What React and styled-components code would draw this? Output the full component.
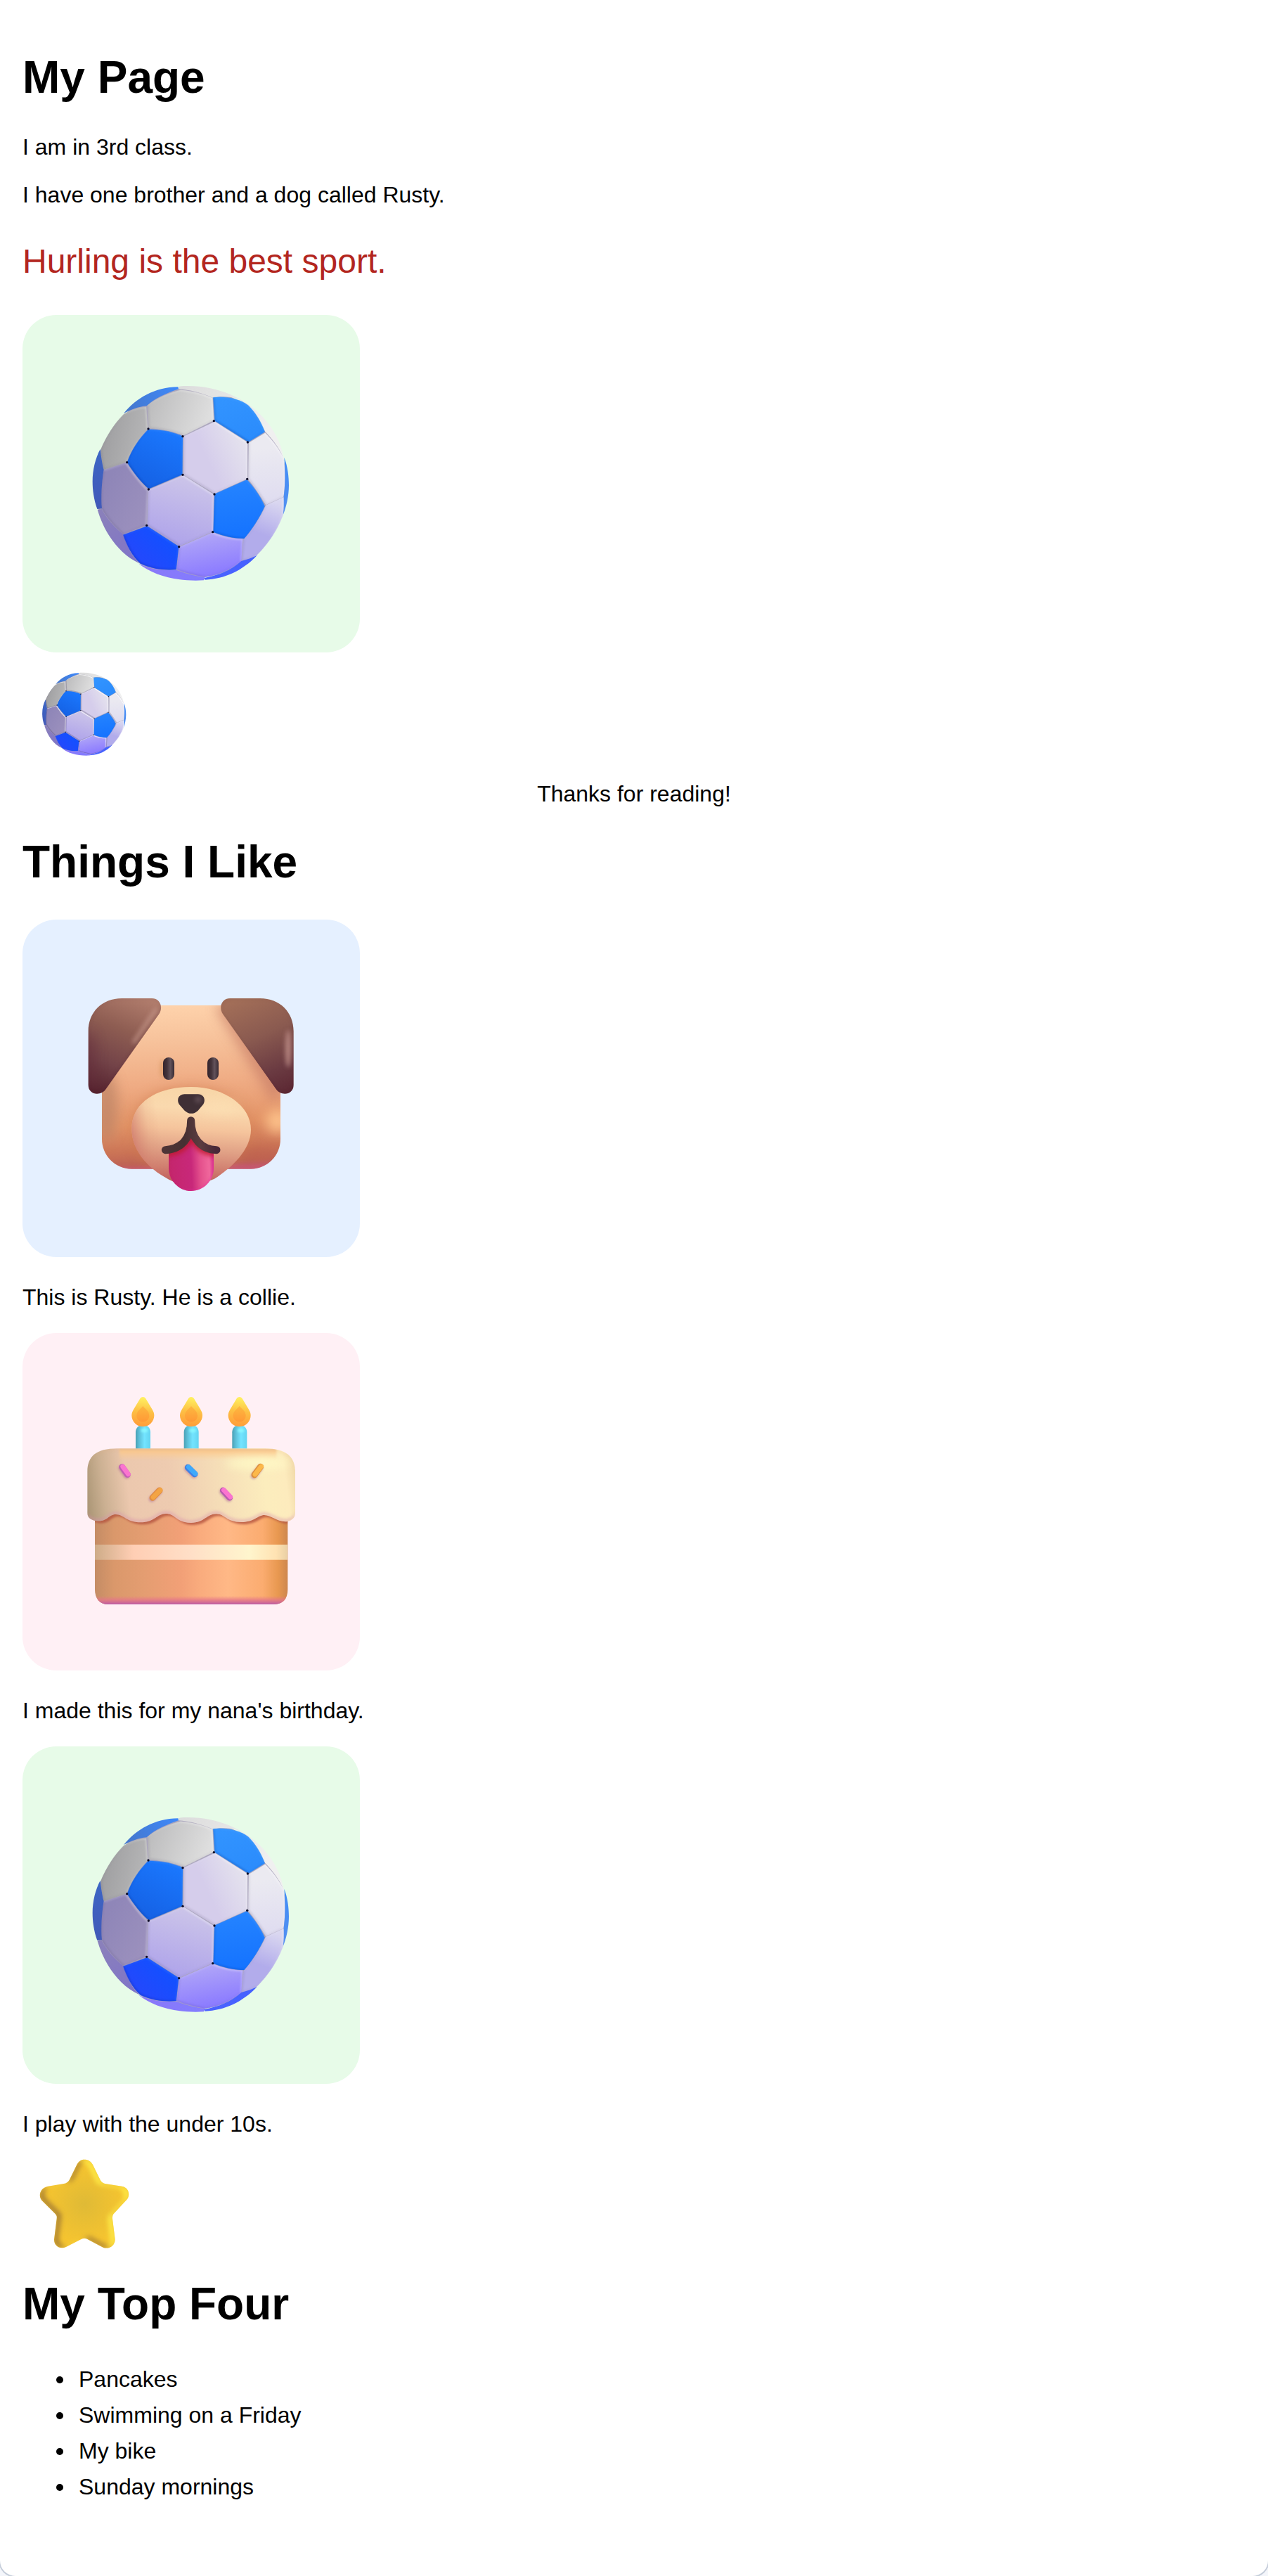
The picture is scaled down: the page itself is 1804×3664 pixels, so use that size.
import React, { useId } from "react";
import styled, { createGlobalStyle } from "styled-components";

const colours = {
    text: "#000000",
    accent: "#b3261e",
    page: "#ffffff",
    backdrop: "#f4f6fb",
    frame: "#c5cdda",
    green: "#e7fbe8",
    blue: "#e5f0ff",
    pink: "#fff0f5",
};

const GlobalStyle = createGlobalStyle`
    body {
        margin: 0;
        background: ${colours.backdrop};
        color: ${colours.text};
        font-family: "Liberation Sans", Arial, sans-serif;
        font-size: 32px;
        line-height: 51px;
    }
`;

const Page = styled.main`
    box-sizing: border-box;
    display: flex;
    flex-direction: column;
    min-height: 100vh;
    padding: 32px;
    background: ${colours.page};
    border-radius: 0 0 22px 22px;
    box-shadow: 0 0 0 2px ${colours.frame};
`;

const Section = styled.section`
    display: flex;
    flex-direction: column;
    padding-top: ${({ $space }) => $space}px;
`;

const Title = styled.h1`
    margin: 0 0 ${({ $below }) => $below || 43}px;
    font-size: 64px;
    font-weight: 700;
    line-height: 77px;
`;

const Text = styled.p`
    margin: 0 0 17px;
`;

const BigText = styled.p`
    margin: 13px 0 38px;
    color: ${colours.accent};
    font-size: 48px;
    line-height: 77px;
`;

const CenteredText = styled.p`
    margin: 0;
    text-align: center;
`;

const Figure = styled.figure`
    margin: 0 0 ${({ $last }) => ($last ? 0 : 25)}px;
`;

const Caption = styled.figcaption`
    margin-top: 32px;
`;

const Card = styled.div`
    display: flex;
    align-items: center;
    justify-content: center;
    width: 480px;
    max-width: 100%;
    aspect-ratio: 1;
    border-radius: 48px;
    background: ${({ $colour }) => $colour};

    svg {
        width: 300px;
        height: 300px;
    }
`;

const Sticker = styled.div`
    display: flex;
    margin: 24px;

    svg {
        width: 128px;
        height: 128px;
    }
`;

const List = styled.ul`
    margin: 0;
    padding-left: 48px;
    list-style: none;
`;

const Item = styled.li`
    display: flex;
    align-items: center;
    gap: 22px;

    &::before {
        content: "";
        width: 10px;
        height: 10px;
        border-radius: 50%;
        background: ${colours.text};
    }
`;

// lights one side of a shape's inner edge and shades the other
const Bevel = ({ id, dx, dy, blur, light, lightOpacity, dark, darkOpacity }) => (
    <filter id={id} x="-10%" y="-10%" width="120%" height="120%" colorInterpolationFilters="sRGB">
        <feOffset in="SourceAlpha" dx={-dx} dy={-dy} result="a" />
        <feComposite in="SourceAlpha" in2="a" operator="out" />
        <feGaussianBlur stdDeviation={blur} result="lightEdge" />
        <feFlood floodColor={light} floodOpacity={lightOpacity} />
        <feComposite in2="lightEdge" operator="in" />
        <feComposite in2="SourceAlpha" operator="in" result="lit" />
        <feOffset in="SourceAlpha" dx={dx} dy={dy} result="b" />
        <feComposite in="SourceAlpha" in2="b" operator="out" />
        <feGaussianBlur stdDeviation={blur} result="darkEdge" />
        <feFlood floodColor={dark} floodOpacity={darkOpacity} />
        <feComposite in2="darkEdge" operator="in" />
        <feComposite in2="SourceAlpha" operator="in" result="shade" />
        <feMerge>
            <feMergeNode in="SourceGraphic" />
            <feMergeNode in="shade" />
            <feMergeNode in="lit" />
        </feMerge>
    </filter>
);

const Blur = ({ id, by }) => (
    <filter id={id} x="-200%" y="-200%" width="500%" height="500%" colorInterpolationFilters="sRGB">
        <feGaussianBlur stdDeviation={by} />
    </filter>
);

// stops is a list of [offset, colour, opacity]
const Stops = ({ stops }) =>
    stops.map(([offset, colour, opacity = 1]) => (
        <stop key={offset} offset={offset} stopColor={colour} stopOpacity={opacity} />
    ));

const Linear = ({ id, line: [x1, y1, x2, y2], stops }) => (
    <linearGradient id={id} gradientUnits="userSpaceOnUse" x1={x1} y1={y1} x2={x2} y2={y2}>
        <Stops stops={stops} />
    </linearGradient>
);

const ballPanels = [
    { d: "M468 474C520 410 600 362 700 361L702 370C650 388 600 410 566 442C530 445 495 460 468 474Z", line: [480, 470, 690, 365], from: "#4577cc", to: "#3f88f8", flat: true },
    { d: "M702 361C710 357 720 357 735 357C870 355 990 410 1062 490C1108 540 1140 600 1150 662C1130 620 1100 580 1072 552C1040 490 1000 430 950 410C910 400 870 402 850 408C800 385 750 374 702 370Z", line: [710, 360, 1100, 520], from: "#dcdcdc", to: "#f0f0f0", flat: true },
    { d: "M570 440C610 405 670 385 710 374C760 378 805 388 847 408L852 504L724 568C680 550 625 540 575 536Z", line: [580, 430, 820, 520], from: "#bdbdbe", to: "#dedede" },
    { d: "M564 446L571 540C535 575 505 625 480 682L383 714C375 685 370 655 371 626C395 570 430 515 468 478C500 458 535 448 564 446Z", line: [390, 560, 560, 600], from: "#a0a0a2", to: "#b6b6b7" },
    { d: "M573 542C625 542 680 552 720 572L718 735L575 796C540 765 508 725 483 683C500 630 535 580 573 542Z", line: [680, 560, 560, 790], from: "#1a77fd", to: "#1561e4", blue: true },
    { d: "M850 406C900 400 960 410 1000 440C1030 470 1055 510 1070 553L1000 596L857 506Z", line: [900, 400, 980, 590], from: "#3294ff", to: "#2b8cfc", blue: true },
    { d: "M857 509L996 598L996 752L856 816L724 736L724 572Z", line: [820, 660, 990, 580], from: "#d5cdeb", to: "#e6e4ee" },
    { d: "M1002 600L1072 557C1105 590 1130 625 1150 662C1158 720 1158 780 1150 830L1075 864C1050 825 1025 785 1000 755Z", line: [1080, 620, 1090, 860], from: "#ebeaf1", to: "#dfdcf0" },
    { d: "M1153 662C1168 700 1173 745 1173 780C1173 825 1162 875 1147 910L1150 835C1158 780 1158 720 1153 662Z", line: [1160, 660, 1160, 900], from: "#3f8cf8", to: "#5490f0", flat: true },
    { d: "M856 818L994 757C1025 790 1052 830 1070 870C1048 920 1015 970 983 1008C940 1008 895 998 850 980Z", line: [950, 770, 980, 1000], from: "#2483ff", to: "#1573ff", blue: true },
    { d: "M1075 866L1150 832C1152 860 1150 890 1147 910C1120 980 1080 1035 1035 1080C1015 1090 995 1100 972 1102L980 1012C1015 975 1050 920 1075 866Z", line: [1110, 850, 1060, 990], from: "#d9d6f0", to: "#b2aceb" },
    { d: "M722 738L852 820L849 978L706 1040L569 952L574 800Z", line: [760, 740, 680, 1030], from: "#cdc6e9", to: "#afa4ea" },
    { d: "M480 684C508 728 540 768 572 800L565 950L466 990C430 960 395 920 374 880C370 820 372 770 383 716Z", line: [380, 800, 560, 900], from: "#8f86b8", to: "#9b90bd" },
    { d: "M368 626C371 655 376 690 383 714C374 770 370 830 375 880L355 882C340 840 335 800 335 765C335 715 347 665 368 626Z", line: [360, 640, 360, 880], from: "#3c65c4", to: "#4259b8", flat: true },
    { d: "M356 884L374 882C395 922 430 962 466 990C478 1030 500 1080 532 1112C450 1075 385 985 356 884Z", line: [380, 900, 520, 1100], from: "#8a80bb", to: "#8074c8", flat: true },
    { d: "M466 992L568 955L703 1042L692 1140C635 1145 585 1135 540 1115C505 1085 480 1035 466 992Z", line: [620, 980, 530, 1080], from: "#1350ff", to: "#2249fc", blue: true },
    { d: "M706 1044L848 982C890 1000 935 1010 976 1010L970 1104C920 1145 870 1165 812 1172C775 1165 730 1155 694 1140Z", line: [830, 1000, 860, 1150], from: "#ada2f8", to: "#8d7dff" },
    { d: "M530 1114C580 1140 635 1146 692 1142C735 1158 775 1168 815 1174L810 1186C700 1192 600 1170 530 1114Z", line: [560, 1130, 800, 1180], from: "#8a78f8", to: "#837cff", flat: true },
    { d: "M812 1176C870 1165 925 1145 970 1104C995 1098 1015 1090 1037 1080C975 1145 900 1180 815 1184Z", line: [830, 1170, 1020, 1090], from: "#4c62ff", to: "#4461ff", flat: true },
];

const ballSeams = [
    [573, 540], [720, 572], [853, 506], [997, 597], [995, 754], [855, 819], [720, 736],
    [574, 798], [482, 683], [848, 980], [704, 1043], [566, 952],
];

const Ball = () => {
    const id = useId();
    const panelFilter = ({ flat, blue }) => {
        if (flat) return undefined;
        return blue ? `url(#${id}blueEdge)` : `url(#${id}edge)`;
    };
    return (
        <svg viewBox="306 324 900 900" role="img" aria-label="Blue and white football">
            <defs>
                <Bevel id={`${id}edge`} dx={4} dy={-4} blur={4} light="#ffffff" lightOpacity={0.7} dark="#302850" darkOpacity={0.25} />
                <Bevel id={`${id}blueEdge`} dx={3} dy={-3} blur={4} light="#6cb4ff" lightOpacity={0.35} dark="#001c70" darkOpacity={0.4} />
                {ballPanels.map((panel, i) => (
                    <Linear key={panel.d} id={`${id}p${i}`} line={panel.line} stops={[[0, panel.from], [1, panel.to]]} />
                ))}
            </defs>
            <ellipse cx="754" cy="772" rx="409" ry="406" fill="#aaa5bc" />
            {ballPanels.map((panel, i) => (
                <path
                    key={panel.d}
                    d={panel.d}
                    fill={`url(#${id}p${i})`}
                    stroke={panel.flat ? "none" : `url(#${id}p${i})`}
                    strokeWidth="1"
                    filter={panelFilter(panel)}
                />
            ))}
            {ballSeams.map(([x, y]) => (
                <circle key={`${x}-${y}`} cx={x} cy={y} r="5" fill="#0b0b26" />
            ))}
        </svg>
    );
};

const leftEar = "M460 390H588C625 390 638 430 618 458L392 777C372 808 317 804 317 760V530C317 450 375 390 460 390Z";
const rightEar = "M1050 390H922C885 390 872 430 892 458L1118 777C1138 808 1193 804 1193 760V530C1193 450 1135 390 1050 390Z";
const dogHead = "M500 420H1012C1080 420 1137 477 1137 545V990C1137 1062 1080 1118 1010 1118H502C432 1118 375 1062 375 990V545C375 477 432 420 500 420Z";
const muzzle = "M502 945C502 835 610 768 755 768C900 768 1011 850 1011 950C1011 1035 930 1112 855 1160Q755 1205 675 1170C585 1127 502 1050 502 945Z";
const tongue = "M660 1040L756 985L852 1040V1114C852 1170 808 1212 756 1212S660 1170 660 1114Z";

const Dog = () => {
    const id = useId();
    const url = (name) => `url(#${id}${name})`;
    return (
        <svg viewBox="306 324 900 900" role="img" aria-label="Brown dog with its tongue out">
            <defs>
                <Linear id={`${id}head`} line={[720, 420, 755, 1118]} stops={[[0, "#fed2ab"], [0.2, "#f7c39c"], [0.48, "#efab83"], [0.72, "#e39467"], [0.88, "#cb7456"], [0.96, "#be6354"], [1, "#c45870"]]} />
                <Linear id={`${id}muzzle`} line={[770, 780, 745, 1180]} stops={[[0, "#f8d6a8"], [0.2, "#fad9ae"], [0.42, "#f5c49c"], [0.65, "#e0a085"], [0.85, "#cf7c6e"], [1, "#bd5b5b"]]} />
                <Linear id={`${id}muzzleSide`} line={[502, 950, 620, 930]} stops={[[0, "#cb7066", 0.65], [0.6, "#d4886e", 0.15], [1, "#d4886e", 0]]} />
                <Linear id={`${id}ear1`} line={[550, 390, 380, 800]} stops={[[0, "#b07c6c"], [0.35, "#8e5d52"], [0.7, "#734348"], [1, "#56232f"]]} />
                <Linear id={`${id}ear2`} line={[970, 390, 1150, 800]} stops={[[0, "#a26e58"], [0.4, "#8a5a50"], [0.75, "#6b3b42"], [1, "#5c2833"]]} />
                <Linear id={`${id}tongue`} line={[660, 1100, 852, 1090]} stops={[[0, "#c4266c"], [0.5, "#c8287a"], [0.7, "#e4508c"], [0.9, "#f0689c"], [1, "#d82c8c"]]} />
                <Linear id={`${id}eye`} line={[0, 0, 48, 0]} stops={[[0, "#34242c"], [0.35, "#43333a"], [0.65, "#62525a"], [1, "#382b34"]]} />
                <Linear id={`${id}mouth`} line={[640, 1040, 860, 1040]} stops={[[0, "#4e3436"], [0.4, "#463032"], [0.7, "#5c3c40"], [1, "#482838"]]} />
                <Blur id={`${id}soft`} by={26} />
                <Blur id={`${id}glow`} by={9} />
                <Bevel id={`${id}earEdge`} dx={-2} dy={-4} blur={7} light="#4c1c2c" lightOpacity={0.15} dark="#4c1c2c" darkOpacity={0.35} />
                <Bevel id={`${id}tongueEdge`} dx={2} dy={4} blur={4} light="#e828a0" lightOpacity={0.8} dark="#c01c38" darkOpacity={0.3} />
                <clipPath id={`${id}headClip`}>
                    <path d={dogHead} />
                </clipPath>
                <clipPath id={`${id}leftClip`}>
                    <path d={leftEar} />
                </clipPath>
                <clipPath id={`${id}rightClip`}>
                    <path d={rightEar} />
                </clipPath>
                <clipPath id={`${id}tongueClip`}>
                    <path d={tongue} />
                </clipPath>
            </defs>
            <path d={dogHead} fill={url("head")} />
            <g clipPath={url("headClip")}>
                <path d="M860 430L1110 840L1160 760L900 410Z" fill="#c97f68" opacity="0.75" filter={url("soft")} />
                <ellipse cx="395" cy="850" rx="48" ry="150" fill="#bd8466" opacity="0.75" filter={url("soft")} />
                <path d={muzzle} fill="#cf7c50" opacity="0.6" filter={url("soft")} />
                <ellipse cx="1125" cy="915" rx="48" ry="50" fill="#ffc68e" opacity="0.9" filter={url("soft")} />
                <ellipse cx="1040" cy="1060" rx="90" ry="36" fill="#bf624c" opacity="0.5" filter={url("soft")} />
                <rect x="375" y="1110" width="762" height="12" fill="#cb5a78" opacity="0.6" filter={url("glow")} />
            </g>
            <path d={leftEar} fill={url("ear1")} filter={url("earEdge")} />
            <g clipPath={url("leftClip")}>
                <ellipse cx="322" cy="660" rx="26" ry="130" fill="#652e3c" opacity="0.6" filter={url("soft")} />
                <path d="M604 440L512 576" stroke="#cfa195" strokeWidth="15" strokeLinecap="round" opacity="0.65" filter={url("glow")} />
            </g>
            <path d={rightEar} fill={url("ear2")} filter={url("earEdge")} />
            <g clipPath={url("rightClip")}>
                <ellipse cx="1170" cy="605" rx="12" ry="80" fill="#bd8c86" opacity="0.9" filter={url("glow")} />
            </g>
            <path d={muzzle} fill={url("muzzle")} />
            <path d={muzzle} fill={url("muzzleSide")} />
            <ellipse cx="880" cy="855" rx="80" ry="26" fill="#fde2b6" opacity="0.6" filter={url("soft")} />
            <ellipse cx="634" cy="690" rx="8" ry="40" fill="#c68445" opacity="0.55" filter={url("glow")} />
            <g transform="translate(636 642)">
                <rect width="48" height="96" rx="24" fill={url("eye")} />
            </g>
            <g transform="translate(825 642)">
                <rect width="48" height="96" rx="24" fill={url("eye")} />
            </g>
            <path d="M727 799H785C812 800 820 826 805 845L785 869Q757 894 728 869L707 845C692 826 700 800 727 799Z" fill="#3f2f35" />
            <ellipse cx="786" cy="822" rx="12" ry="12" fill="#756068" opacity="0.8" filter={url("glow")} />
            <path d={tongue} fill={url("tongue")} filter={url("tongueEdge")} />
            <g clipPath={url("tongueClip")}>
                <path d="M755 925C755 1000 720 1042 646 1044M755 925C757 1000 800 1044 864 1044" fill="none" stroke="#c01a30" strokeWidth="42" opacity="0.85" filter={url("glow")} />
            </g>
            <path d="M755 911C755 988 714 1033 646 1037M755 911C755 988 800 1036 864 1037" fill="none" stroke={url("mouth")} strokeWidth="33" strokeLinecap="round" />
        </svg>
    );
};

const frosting =
    "M313 640C313 575 350 541 440 541H1070C1160 541 1200 575 1200 640V815C1200 838 1186 846 1168 852C1125 858 1100 825 1068 825C1040 825 1026 855 970 855C905 855 900 820 863 820C822 820 812 858 756 858C692 858 690 819 648 819C610 819 600 856 540 856C480 856 468 822 434 822C402 822 400 855 350 850C326 844 313 836 313 815Z";
const sponge = "M345 780H1168V1142C1168 1184 1146 1206 1106 1206H402C364 1206 345 1180 345 1142Z";

const sprinkles = [
    { line: "M461 620L484 652", colour: "#fb74d0", shade: "#c45cb4" },
    { line: "M742 622L771 650", colour: "#3fa9fb", shade: "#3f80e4" },
    { line: "M1052 619L1026 653", colour: "#fcb84a", shade: "#dc9040" },
    { line: "M621 720L591 751", colour: "#f3a444", shade: "#e08d42" },
    { line: "M892 720L920 750", colour: "#fb74d0", shade: "#b85ab0" },
];

const Cake = () => {
    const id = useId();
    const url = (name) => `url(#${id}${name})`;
    return (
        <svg viewBox="306 318 900 900" role="img" aria-label="Birthday cake with three candles">
            <defs>
                <Linear id={`${id}sponge`} line={[345, 1000, 1168, 1000]} stops={[[0, "#c48c65"], [0.1, "#da986b"], [0.25, "#e49d71"], [0.45, "#f2a077"], [0.54, "#f9ab7d"], [0.69, "#ffb886"], [0.87, "#fbac70"], [0.95, "#e89850"], [1, "#cd864e"]]} />
                <Linear id={`${id}cream`} line={[345, 984, 1168, 984]} stops={[[0, "#ceac88"], [0.2, "#ffceb4"], [0.5, "#ffdfc7"], [0.8, "#fff5cd"], [0.94, "#ffe2b2"], [1, "#e9cfa3"]]} />
                <Linear id={`${id}base`} line={[0, 1170, 0, 1206]} stops={[[0, "#e87888", 0], [0.5, "#e2748a", 0.8], [1, "#bb5ba5"]]} />
                <Linear id={`${id}frosting`} line={[313, 760, 1200, 640]} stops={[[0, "#ad9878"], [0.08, "#cbb092"], [0.2, "#ecc8ae"], [0.4, "#eecbb0"], [0.65, "#f6dfb8"], [0.85, "#fcedbd"], [0.95, "#fdebbd"], [1, "#f2dbab"]]} />
                <Linear id={`${id}top`} line={[0, 541, 0, 590]} stops={[[0, "#e6b888"], [0.25, "#fac88c", 0.9], [1, "#fccc90", 0]]} />
                <Linear id={`${id}candle`} line={[-32, 0, 32, 0]} stops={[[0, "#489eb2"], [0.25, "#5cbfd8"], [0.6, "#73e4ff"], [1, "#64d4f0"]]} />
                <Linear id={`${id}flame`} line={[8, 325, -4, 440]} stops={[[0, "#fff060"], [0.5, "#fdc045"], [1, "#ffa03a"]]} />
                <Linear id={`${id}flameCore`} line={[0, 360, 0, 425]} stops={[[0, "#fdb840"], [1, "#ff9a36"]]} />
                <Blur id={`${id}soft`} by={20} />
                <Blur id={`${id}near`} by={5} />
                <Bevel id={`${id}edge`} dx={0} dy={8} blur={7} light="#d68fac" lightOpacity={0.7} dark="#e0a878" darkOpacity={0.2} />
                <clipPath id={`${id}spongeClip`}>
                    <path d={sponge} />
                </clipPath>
                <clipPath id={`${id}frostingClip`}>
                    <path d={frosting} />
                </clipPath>
            </defs>
            {[550, 756, 962].map((x) => (
                <g key={x} transform={`translate(${x} 0)`}>
                    <path d="M-31 545V472C-31 430 32 430 32 472V545Z" fill={url("candle")} />
                    <ellipse cx="6" cy="464" rx="15" ry="8" fill="#8efcff" opacity="0.8" filter={url("near")} />
                    <path d="M-12 328C-6 319 6 319 12 328L39 373C45 383 48 391 48 400A48 47 0 0 1 -48 400C-48 391 -45 383 -39 373Z" fill={url("flame")} />
                    <path d="M0 360C12 374 27 382 27 401C27 417 14 427 0 427S-27 417-27 401C-27 382-12 374 0 360Z" fill={url("flameCore")} />
                </g>
            ))}
            <path d={sponge} fill={url("sponge")} />
            <g clipPath={url("spongeClip")}>
                <path d={frosting} transform="translate(10 9)" fill="#b45440" opacity="0.8" filter={url("near")} />
                <rect x="345" y="951" width="823" height="65" fill={url("cream")} />
                <rect x="345" y="1170" width="823" height="36" fill={url("base")} />
            </g>
            <path d={frosting} fill={url("frosting")} filter={url("edge")} />
            <g clipPath={url("frostingClip")}>
                <rect x="450" y="541" width="670" height="50" fill={url("top")} filter={url("near")} />
                <ellipse cx="1040" cy="605" rx="140" ry="20" fill="#fffcc8" opacity="0.9" filter={url("soft")} />
            </g>
            {sprinkles.map(({ line, colour, shade }) => (
                <g key={line} fill="none" strokeLinecap="round">
                    <path d={line} transform="translate(-3 5)" stroke="#b47898" strokeWidth="27" opacity="0.6" filter={url("near")} />
                    <path d={line} stroke={shade} strokeWidth="27" />
                    <path d={line} transform="translate(3 -2)" stroke={colour} strokeWidth="20" />
                </g>
            ))}
        </svg>
    );
};

const Star = () => {
    const id = useId();
    return (
        <svg viewBox="108 93 384 384" role="img" aria-label="Gold star">
            <defs>
                <radialGradient id={`${id}gold`} gradientUnits="userSpaceOnUse" cx="300" cy="285" r="170">
                    <Stops stops={[[0, "#dfba36"], [0.6, "#edc032"], [1, "#f5c430"]]} />
                </radialGradient>
                <Bevel id={`${id}edge`} dx={18} dy={-6} blur={11} light="#fff04a" lightOpacity={1} dark="#8f6a35" darkOpacity={0.9} />
            </defs>
            <path
                d="M300 95C317 95 329 103 336 117L368 182Q374 194 388 198L460 209C488 213 497 243 483 264L424 328Q418 336 420 348L431 435C432 462 405 480 380 470L312 434Q300 428 288 434L222 468C197 480 170 464 171 436L182 348Q184 336 177 328L119 270C100 248 114 214 145 209L212 198Q228 195 236 182L268 117C275 103 285 95 300 95Z"
                fill={`url(#${id}gold)`}
                filter={`url(#${id}edge)`}
            />
        </svg>
    );
};

const likes = [
    { colour: colours.blue, Picture: Dog, caption: "This is Rusty. He is a collie." },
    { colour: colours.pink, Picture: Cake, caption: "I made this for my nana's birthday." },
    { colour: colours.green, Picture: Ball, caption: "I play with the under 10s." },
];

const topFour = ["Pancakes", "Swimming on a Friday", "My bike", "Sunday mornings"];

const App = () => (
    <>
        <GlobalStyle />
        <Page>
            <Section $space={40}>
                <Title $below={35}>My Page</Title>
                <Text>I am in 3rd class.</Text>
                <Text>I have one brother and a dog called Rusty.</Text>
                <BigText>Hurling is the best sport.</BigText>
                <Card $colour={colours.green}>
                    <Ball />
                </Card>
                <Sticker>
                    <Ball />
                </Sticker>
                <CenteredText>Thanks for reading!</CenteredText>
            </Section>
            <Section $space={33}>
                <Title>Things I Like</Title>
                {likes.map(({ colour, Picture, caption }, i) => (
                    <Figure key={caption} $last={i === likes.length - 1}>
                        <Card $colour={colour}>
                            <Picture />
                        </Card>
                        <Caption>{caption}</Caption>
                    </Figure>
                ))}
                <Sticker>
                    <Star />
                </Sticker>
            </Section>
            <Section $space={16}>
                <Title>My Top Four</Title>
                <List>
                    {topFour.map((item) => (
                        <Item key={item}>{item}</Item>
                    ))}
                </List>
            </Section>
        </Page>
    </>
);

export default App;
